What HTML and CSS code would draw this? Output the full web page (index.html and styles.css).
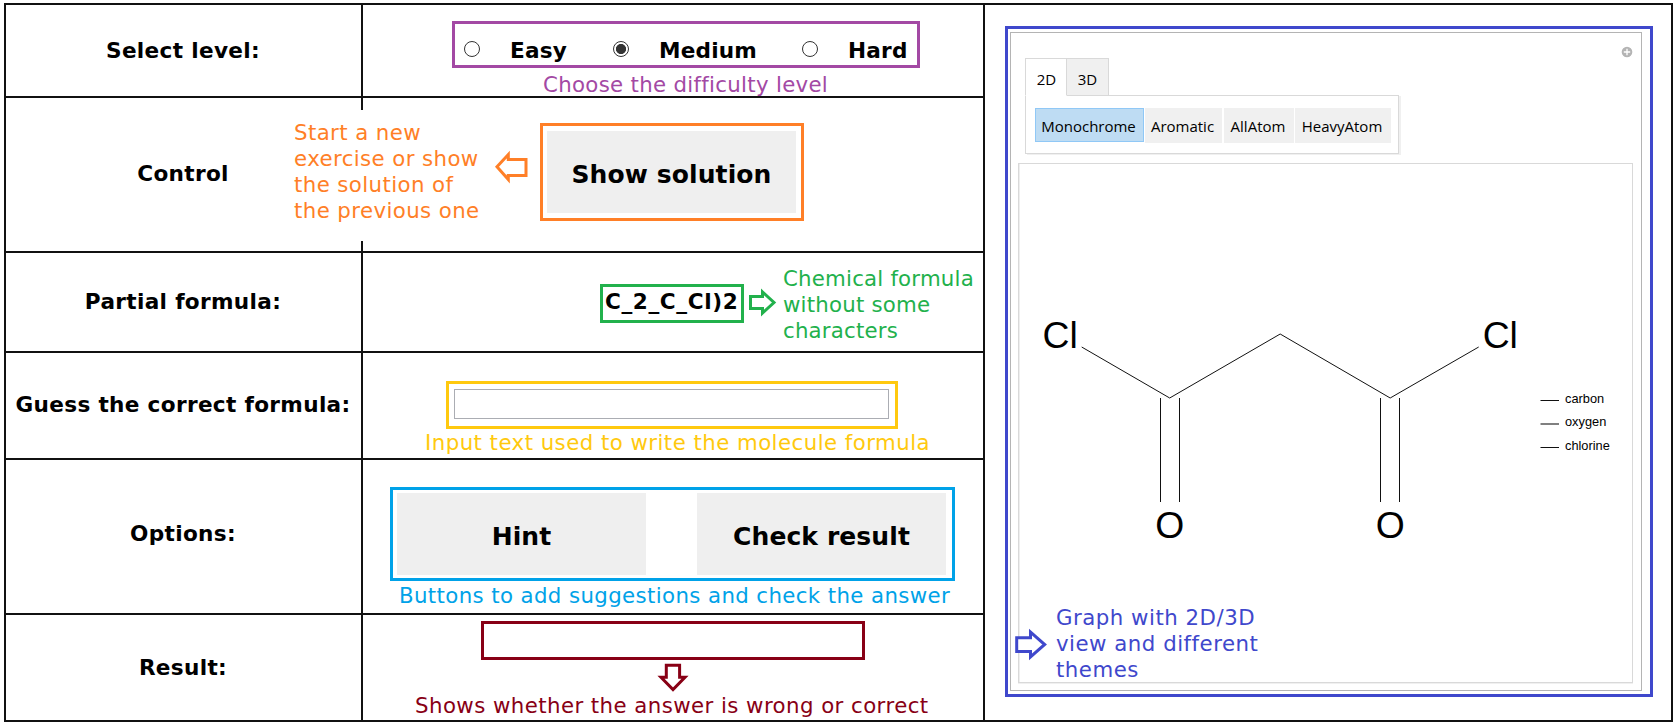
FILE: index.html
```html
<!DOCTYPE html>
<html lang="en">
<head>
<meta charset="utf-8">
<title>Molecule formula exercise</title>
<link rel="stylesheet" href="styles.css">
</head>
<body>
<main class="sheet">
  <div class="label">Select level:</div>
  <section class="cell">
    <div class="frame levels">
      <span class="radio"></span><b class="easy">Easy</b>
      <span class="radio checked"></span><b class="medium">Medium</b>
      <span class="radio"></span><b class="hard">Hard</b>
    </div>
    <p class="note note-level">Choose the difficulty level</p>
  </section>

  <div class="label control-label">Control</div>
  <section class="cell control">
    <div class="note control-note">Start a new<br>exercise or show<br>the solution of<br>the previous one</div>
    <svg class="arrow-left" width="33" height="32" viewBox="0 0 33 32"><path d="M2 15.8 13.3 3.5V8.5H31V24.5H13.3V28.5Z"/></svg>
    <div class="frame solution"><button>Show solution</button></div>
  </section>

  <div class="label">Partial formula:</div>
  <section class="cell partial">
    <div class="frame formula">C_2_C_Cl)2</div>
    <svg class="arrow-right" width="28" height="28" viewBox="0 0 28 28"><path d="M1.5 7.5H13.5V3L25 13.5 13.5 24V19.5H1.5Z"/></svg>
    <p class="note">Chemical formula<br>without some<br>characters</p>
  </section>

  <div class="label guess-label">Guess the correct formula:</div>
  <section class="cell">
    <div class="frame guess"><input type="text"></div>
    <p class="note note-guess">Input text used to write the molecule formula</p>
  </section>

  <div class="label options-label">Options:</div>
  <section class="cell">
    <div class="frame options"><button>Hint</button><button>Check result</button></div>
    <p class="note note-options">Buttons to add suggestions and check the answer</p>
  </section>

  <div class="label">Result:</div>
  <section class="cell">
    <div class="frame result"></div>
    <svg class="arrow-down" width="28" height="29" viewBox="0 0 28 29"><path d="M7.3 2.2H20.6V14.3H26L14 26.5 2 14.3H7.3Z"/></svg>
    <p class="note note-result">Shows whether the answer is wrong or correct</p>
  </section>

  <section class="cell graph-cell">
    <div class="graph-frame">
      <div class="viewer">
        <svg class="plus" width="12" height="12" viewBox="0 0 12 12"><circle cx="6" cy="6" r="6"/><path d="M6 2.8V9.2M2.8 6H9.2"/></svg>
        <nav class="tabs"><span class="tab active">2D</span><span class="tab">3D</span></nav>
        <div class="themes"><span class="theme mono">Monochrome</span><span class="theme aromatic">Aromatic</span><span class="theme allatom">AllAtom</span><span class="theme heavy">HeavyAtom</span></div>
        <div class="canvas">
          <svg class="molecule" width="612" height="516" viewBox="1020 165 612 516">
            <path class="bond" d="M1081.7 347 1169.7 398 1280.2 334 1390.2 398 1478.7 347"/>
            <path class="double" d="M1160.5 398V502M1179.5 398V502M1380.5 398V502M1399.5 398V502"/>
            <g class="atoms">
              <text x="1042.5" y="348">Cl</text><text x="1482.7" y="348">Cl</text>
              <text x="1155.2" y="538.3">O</text><text x="1375.7" y="538.3">O</text>
            </g>
            <path class="double" d="M1540.5 400.5H1559M1540.5 447.5H1559"/>
            <path class="soft" d="M1540.5 424H1559"/>
            <g class="legend"><text x="1565" y="403">carbon</text><text x="1565" y="426">oxygen</text><text x="1565" y="450">chlorine</text></g>
          </svg>
        </div>
      </div>
      <div class="graph-note">
        <svg width="32" height="32" viewBox="0 0 32 32"><path d="M1.7 8.8H15.5V3L29.7 15.5 15.5 28V22.5H1.7Z"/></svg>
        <p class="note">Graph with 2D/3D<br>view and different<br>themes</p>
      </div>
    </div>
  </section>
</main>
</body>
</html>
```
FILE: styles.css
```css
* { box-sizing: border-box; }
body {
  margin: 0;
  padding: 3px 0 0 4px;
  background: #fff;
  color: #000;
  font-family: "DejaVu Sans", Verdana, sans-serif;
  overflow: hidden;
}
p { margin: 0; }
svg { display: block; flex: none; overflow: visible; }
.sheet {
  display: grid;
  grid-template-columns: 355px 620px 686px;
  grid-template-rows: 91px 153px 98px 105px 153px 105px;
  gap: 2px;
  width: 1669px;
  padding: 2px;
  background: #111;
}
.label, .cell { background: #fff; grid-column: 1; }
.cell { grid-column: 2; padding-left: 1px; }
.label {
  display: flex;
  align-items: center;
  justify-content: center;
  padding-right: 1px;
  font-size: 21.6px;
  letter-spacing: .33px;
  font-weight: bold;
  line-height: 26px;
  white-space: nowrap;
}
.control-label, .guess-label { padding-bottom: 2px; }
.options-label { padding-bottom: 6px; }
.frame { border: 3px solid; }
.note { font-size: 21.3px; line-height: 26px; white-space: nowrap; letter-spacing: .4px; }
button {
  padding: 5px 0 0;
  border: 0;
  background: #efefef;
  color: #000;
  font: bold 25px "DejaVu Sans", Verdana, sans-serif;
  letter-spacing: .1px;
}

.levels {
  display: flex;
  width: 468px;
  height: 47px;
  margin: 16px 0 0 88px;
  padding: 14px 0 0 9px;
  border-color: #a349a4;
  font-size: 21.6px;
  letter-spacing: .2px;
  line-height: 26px;
}
.radio {
  flex: none;
  width: 16px;
  height: 16px;
  margin-top: 3px;
  border: 1px solid #333;
  border-radius: 50%;
}
.checked { background: radial-gradient(circle, #333 4.7px, #fff 5.4px); }
.easy { width: 103px; margin-left: 30px; }
.medium { width: 143px; margin-left: 30px; }
.hard { margin-left: 30px; }
.note-level { margin: 4px 0 0 179px; height: 20px; color: #a349a4; letter-spacing: .3px; }

.control { position: relative; display: flex; }
.control-note {
  position: absolute;
  left: -69px;
  top: 12px;
  height: 131px;
  padding: 10px 0;
  background: #fff;
  color: #ff7f27;
}
.arrow-left { margin: 53px 0 0 131px; fill: #fff; stroke: #ff7f27; stroke-width: 3; }
.solution { width: 264px; height: 98px; margin: 25px 0 0 12px; padding: 5px 4px; border-color: #ff7f27; }
.solution button { width: 249px; height: 82px; }

.partial { display: flex; }
.formula {
  width: 144px;
  height: 39px;
  margin: 31px 0 0 236px;
  padding-left: 2px;
  border-color: #22b14c;
  font-size: 21.6px;
  font-weight: bold;
  letter-spacing: .6px;
  line-height: 30px;
  white-space: nowrap;
}
.arrow-right { margin: 36px 0 0 5px; fill: #fff; stroke: #22b14c; stroke-width: 3; }
.partial .note { margin: 13px 0 0 6px; color: #22b14c; letter-spacing: .2px; }

.guess { width: 452px; height: 48px; margin: 28px 0 0 82px; padding: 5px; border-color: #ffc90e; }
.guess input { display: block; width: 435px; height: 30px; border: 1px solid #abadb3; background: #fff; }
.note-guess { margin: 1px 0 0 61px; color: #ffc90e; letter-spacing: .45px; }

.options { display: flex; gap: 51px; width: 565px; height: 94px; margin: 27px 0 0 26px; padding: 3px 4px; border-color: #00a2e8; }
.options button { width: 249px; height: 82px; }
.note-options { margin: 2px 0 0 35px; color: #00a2e8; letter-spacing: .38px; }

.result { width: 384px; height: 39px; margin: 6px 0 0 117px; border-color: #880015; }
.arrow-down { margin: 3px 0 0 295px; fill: #fff; stroke: #880015; stroke-width: 3; }
.note-result { margin: 1px 0 0 51px; color: #880015; letter-spacing: .43px; }

.graph-cell { grid-column: 3; grid-row: 1 / 7; padding: 21px 0 0 20px; }
.graph-frame { position: relative; width: 648px; height: 671px; padding: 3px 2px; border: 3px solid #3f48cc; }
.viewer {
  position: relative;
  width: 632px;
  height: 659px;
  padding: 25px 0 0 14px;
  border: 1px solid #b4b4b4;
  font-family: "Open Sans", "Noto Sans", sans-serif;
  font-size: 15px;
}
.plus { position: absolute; right: 8px; top: 13px; fill: #b4b4b4; stroke: #fff; stroke-width: 1.3; }
.tabs { position: relative; z-index: 1; display: flex; height: 38px; }
.tab { width: 42px; height: 38px; border: 1px solid #d9d9d9; border-left: 0; background: #f0f0f0; text-align: center; line-height: 41px; }
.active { padding-left: 1px; border-left: 1px solid #d9d9d9; border-bottom-color: #fff; background: #fff; }
.themes {
  display: flex;
  width: 374px;
  height: 59px;
  margin-top: -1px;
  padding: 12px 0 0 9px;
  border: 1px solid #d9d9d9;
  box-shadow: 2px 1px #f0f0f0;
}
.theme { height: 35px; padding-right: 2px; background: #f0f0f0; text-align: center; line-height: 37px; white-space: nowrap; }
.mono { width: 109px; height: 34px; margin-right: 1px; border: 1px solid #90c8f6; background: #bedcf3; line-height: 35px; }
.aromatic { width: 77px; margin-right: 2px; }
.allatom { width: 70px; margin-right: 1px; }
.heavy { width: 96px; }
.canvas { width: 615px; height: 520px; margin: 9px 0 0 -7px; border: 1px solid #d9d9d9; box-shadow: inset 1px 0 #eee, 0 1px #f0f0f0; padding: 1px; }
.bond, .double, .soft { fill: none; stroke: #111; stroke-width: 1; }
.soft { stroke: #808080; stroke-width: 2; }
.atoms { font: 37.3px "Liberation Sans", Arial, sans-serif; }
.legend { font: 12.8px "Liberation Sans", Arial, sans-serif; }
.graph-note { position: absolute; left: 7px; top: 575px; display: flex; color: #3f48cc; }
.graph-note svg { margin-top: 25px; fill: #fff; stroke: #3f48cc; stroke-width: 3; }
.graph-note .note { margin: 1px 0 0 9px; letter-spacing: .5px; }
```
